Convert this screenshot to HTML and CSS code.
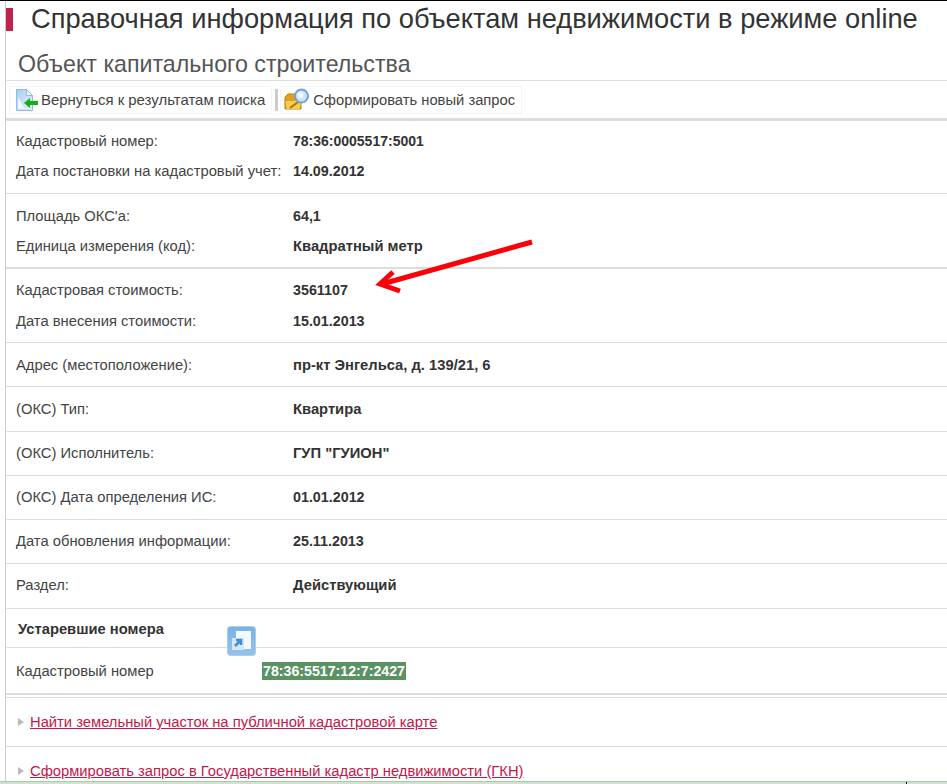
FILE: index.html
```html
<!DOCTYPE html>
<html lang="en">
<head>
    <meta charset="UTF-8">
    <meta name="viewport" content="width=device-width, initial-scale=1.0">
    <title>Справочная информация</title>
    <link rel="stylesheet" href="styles.css">
</head>
<body>
    <div class="page">
        <h1 class="title"><span class="title-mark"></span>Справочная информация по объектам недвижимости в режиме online</h1>
        <h2 class="subtitle">Объект капитального строительства</h2>

        <div class="toolbar">
            <a class="tool tool-back">
                <svg class="tool-icon" width="24" height="24" viewBox="0 0 24 24">
                    <defs>
                        <linearGradient id="docFill" x1="0" y1="0" x2="1" y2="1">
                            <stop offset="0" stop-color="#a9cff0"/>
                            <stop offset="1" stop-color="#e4f0fa"/>
                        </linearGradient>
                    </defs>
                    <path d="M1.5 1.5h10l6 6v15h-16z" fill="url(#docFill)" stroke="#8dbbe3"/>
                    <path d="M11.5 1.5v6h6z" fill="#eef6fc" stroke="#8dbbe3"/>
                    <path d="M3 9l7 12H3z" fill="#f1f7fc"/>
                    <path d="M9 15l6-5v3h8v4h-8v3z" fill="#12b012"/>
                </svg>
                Вернуться к результатам поиска
            </a>
            <span class="tool-sep"></span>
            <a class="tool tool-new">
                <svg class="tool-icon" width="27" height="24" viewBox="0 0 27 24">
                    <path d="M1 9l3-3h10l3 3v12H1z" fill="#e2a11c" stroke="#b98210"/>
                    <path d="M1.500 13h16l-2 8H2.500z" fill="#f8cd4e"/>
                    <path d="M6 20l8-6" stroke="#a9760c" stroke-width="2"/>
                    <circle cx="17.500" cy="8" r="6.500" fill="#cfe3f7" stroke="#6fa3d6" stroke-width="2"/>
                    <circle cx="16.500" cy="7" r="3" fill="#f4f9fe"/>
                </svg>
                Сформировать новый запрос
            </a>
        </div>

        <div class="group group-first">
            <div class="row"><span class="label">Кадастровый номер:</span><span class="value value-code">78:36:0005517:5001</span></div>
            <div class="row"><span class="label">Дата постановки на кадастровый учет:</span><span class="value value-num">14.09.2012</span></div>
        </div>
        <div class="group group-area">
            <div class="row"><span class="label">Площадь ОКС'а:</span><span class="value value-num">64,1</span></div>
            <div class="row"><span class="label">Единица измерения (код):</span><span class="value">Квадратный метр</span></div>
        </div>
        <div class="group group-cost">
            <div class="row"><span class="label">Кадастровая стоимость:</span><span class="value value-num">3561107</span></div>
            <div class="row"><span class="label">Дата внесения стоимости:</span><span class="value value-num">15.01.2013</span></div>
        </div>
        <div class="group group-address">
            <div class="row"><span class="label">Адрес (местоположение):</span><span class="value">пр-кт Энгельса, д. 139/21, 6</span></div>
        </div>
        <div class="group group-type">
            <div class="row"><span class="label">(ОКС) Тип:</span><span class="value">Квартира</span></div>
        </div>
        <div class="group">
            <div class="row"><span class="label">(ОКС) Исполнитель:</span><span class="value">ГУП "ГУИОН"</span></div>
        </div>
        <div class="group">
            <div class="row"><span class="label">(ОКС) Дата определения ИС:</span><span class="value value-num">01.01.2012</span></div>
        </div>
        <div class="group">
            <div class="row"><span class="label">Дата обновления информации:</span><span class="value value-num">25.11.2013</span></div>
        </div>
        <div class="group group-last">
            <div class="row"><span class="label">Раздел:</span><span class="value">Действующий</span></div>
        </div>

        <div class="old-head">Устаревшие номера</div>
        <div class="old-row">
            <span class="label">Кадастровый номер</span>
            <span class="old-value">78:36:5517:12:7:2427</span>
        </div>

        <div class="link-row link-first"><span class="arrow"></span><a class="link">Найти земельный участок на публичной кадастровой карте</a></div>
        <div class="link-row link-last"><span class="arrow"></span><a class="link">Сформировать запрос в Государственный кадастр недвижимости (ГКН)</a></div>

        <svg class="share-icon" width="29" height="30" viewBox="0 0 29 30">
            <defs>
                <linearGradient id="shareFill" x1="0" y1="0" x2="0" y2="1">
                    <stop offset="0" stop-color="#79b2e4"/>
                    <stop offset="1" stop-color="#94c3ec"/>
                </linearGradient>
            </defs>
            <rect x="0.500" y="0.500" width="28" height="29" rx="3" fill="url(#shareFill)" stroke="#a9cdec"/>
            <path d="M9 5h15v18H5V12h4z" fill="#f3f8fc"/>
            <path d="M5 12h12v12H5z" fill="#d5e6f5"/>
            <path d="M8 20l6-6m-5 0h5v5" fill="none" stroke="#3f8fd2" stroke-width="2.500"/>
        </svg>

        <svg class="red-arrow" width="170" height="60" viewBox="0 0 170 60">
            <path d="M160 4L10 46" stroke="#fb0007" stroke-width="5" fill="none"/>
            <path d="M21 34L8 46l20 7" stroke="#fb0007" stroke-width="5" fill="none"/>
        </svg>
    </div>
    <div class="bottom-bar"><span class="bottom-tick"></span></div>
</body>
</html>
```

FILE: styles.css
```css
html, body { margin: 0; padding: 0; background: #fff; }
body { font-family: "Liberation Sans", Arial, sans-serif; font-size: 14.75px; color: #333; height: 784px; overflow: hidden; position: relative; border-top: 1px solid #000; box-sizing: border-box; }
.page { position: relative; margin-left: 5px; border-left: 1px solid #ccc; height: 783px; }

.title { display: flex; align-items: center; margin: 0; padding: 6px 0 0 0; height: 24px; font-size: 27.25px; font-weight: normal; line-height: 24px; color: #333; white-space: nowrap; }
.title-mark { width: 7px; height: 23px; background: #c2224a; margin-right: 18px; }
.subtitle { margin: 0; padding: 21px 0 0 12px; height: 25px; font-size: 23.2px; line-height: 25px; font-weight: normal; color: #555; }

.toolbar { display: flex; align-items: center; border-top: 1px solid #ddd; border-bottom: 3px solid #ddd; margin-top: 3px; height: 37px; padding-left: 3px; }
.tool { display: flex; align-items: center; gap: 2px; height: 26px; padding: 0 6px 0 5px; border: 1px solid #f4f4f4; color: #444; white-space: nowrap; }
.tool-back { font-size: 14.95px; }
.tool-new { padding-left: 3px; }
.tool-sep { width: 3px; height: 22px; background: #ccc; margin: 0 2px 0 3px; }

.group { padding: 6px 0 7px; border-bottom: 1px solid #ddd; }
.group-first { padding: 5px 0 7px; }
.group-area { padding: 7px 0 6px; border-bottom-width: 2px; }
.group-cost { display: grid; gap: 1px; padding: 6px 0; }
.group-address { padding: 7px 0 6px; }
.group-type { padding: 7px 0 7px; }
.group-last { padding: 6px 0 8px; }
.row { display: grid; grid-template-columns: 277px 1fr; height: 30px; line-height: 30px; padding-left: 10px; white-space: nowrap; }
.label { color: #444; }
.value { font-weight: bold; color: #333; }
.value-num { font-size: 14.3px; }
.value-code { font-size: 14px; }

.old-head { padding: 9px 0 0 12px; height: 29px; font-weight: bold; border-bottom: 1px solid #ddd; line-height: 22px; }
.old-row { display: grid; grid-template-columns: 246px auto; height: 45px; padding-left: 10px; align-items: center; border-bottom: 2px solid #ddd; }
.old-value { justify-self: start; background: #5a9263; color: #fff; font-size: 14.2px; font-weight: bold; padding: 0 1px; width: 144px; box-sizing: border-box; line-height: 18px; white-space: nowrap; }

.link-row { display: flex; align-items: center; gap: 6px; height: 48px; padding-left: 12px; border-bottom: 1px solid #ddd; }
.link-first { border-top: 1px solid #ddd; margin-top: 2px; }
.link-last { border-bottom: 0; }
.link { color: #c2184a; text-decoration: underline; white-space: nowrap; }
.arrow { width: 0; height: 0; border-left: 6px solid #bbb; border-top: 4px solid transparent; border-bottom: 4px solid transparent; }

.share-icon { position: absolute; left: 221px; top: 625px; }
.red-arrow { position: absolute; left: 366px; top: 237px; }
.bottom-bar { position: absolute; left: 0; right: 0; bottom: 0; height: 3px; background: #cfe4d0; border-top: 1px solid #a8cbaa; box-sizing: border-box; }
.bottom-tick { position: absolute; left: 906px; top: 0; width: 1px; height: 3px; background: #000; }
```
